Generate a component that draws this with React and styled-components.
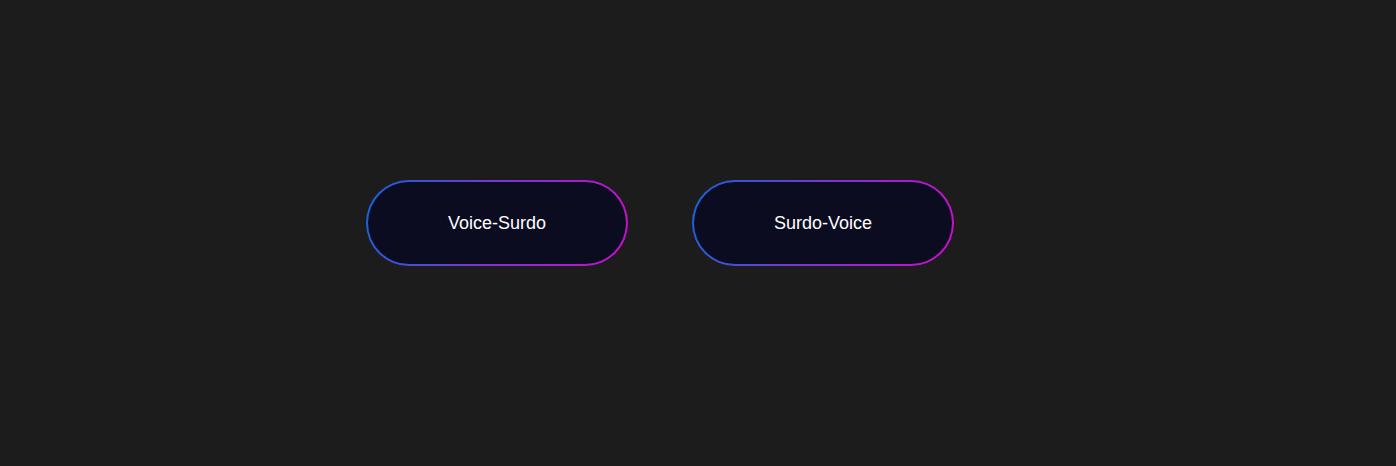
import React from 'react';
import styled, { createGlobalStyle } from 'styled-components';

const GlobalStyle = createGlobalStyle`
  html, body {
    margin: 0;
    padding: 0;
    background: #1c1c1c;
  }
`;

const Page = styled.main`
  box-sizing: border-box;
  min-height: 466px;
  display: flex;
  align-items: center;
  justify-content: center;
  gap: 64px;
  padding: 0 76px 21px 0;
  background: #1c1c1c;
  font-family: 'Liberation Sans', Arial, sans-serif;
`;

const ModeButton = styled.button`
  box-sizing: border-box;
  width: 262px;
  height: 86px;
  padding: 2px 0 0;
  border: 2px solid transparent;
  border-radius: 43px;
  background:
    linear-gradient(#0b0c20, #0b0c20) padding-box,
    linear-gradient(105deg, #1763da 0%, #7538d2 45%, #cc0cc8 100%) border-box;
  color: #ffffff;
  font-family: inherit;
  font-size: 18px;
  cursor: pointer;
`;

const modes = ['Voice-Surdo', 'Surdo-Voice'];

const App = () => (
  <>
    <GlobalStyle />
    <Page>
      {modes.map(mode => (
        <ModeButton key={mode}>{mode}</ModeButton>
      ))}
    </Page>
  </>
);

export default App;
